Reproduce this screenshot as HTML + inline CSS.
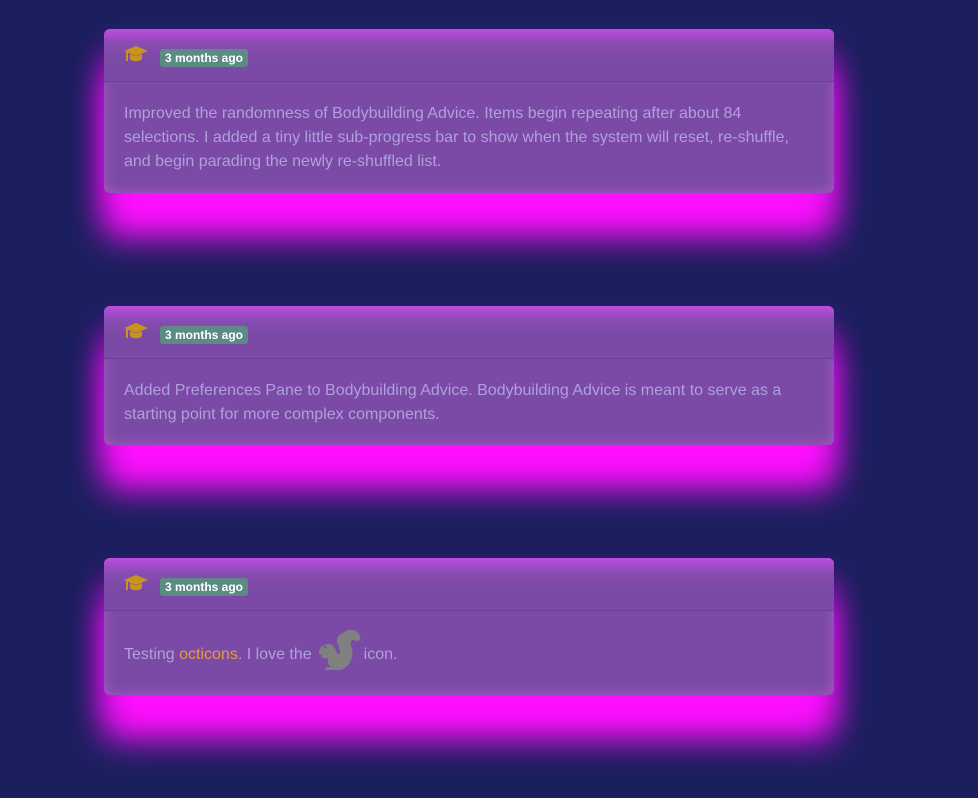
<!DOCTYPE html>
<html><head><style>
body{margin:0;background:#1b1f5e;width:978px;height:798px;overflow:hidden;font-family:"Liberation Sans",sans-serif;}
.card{position:absolute;left:104px;width:730px;border-radius:6px;background:#7a4aa6;
box-shadow:0 44px 34px 0 #ff10ff, 0 20px 30px rgba(255,0,255,.6), inset 0 0 14px rgba(255,120,255,.35);}
.hd{height:52px;border-bottom:1px solid #67408f;position:relative;background:linear-gradient(#c04ce0 0,#8a4cb4 14px,#7a4aa6 30px);border-radius:6px 6px 0 0;}
.cap{position:absolute;left:20px;top:16px;}
.badge{position:absolute;left:56px;top:20px;background:#5c8a84;color:#fff;font-weight:bold;font-size:12px;padding:3px 5px 3px 5px;border-radius:3px;line-height:12px;}
.bd{padding:20px 20px 19px;color:#b0a0dc;font-size:16px;line-height:24px;}
.o{color:#e89a40}
</style></head><body>
<div class="card" style="top:29px;height:164px">
<div class="hd"><svg class="cap" width="25" height="18" viewBox="0 0 25 18"><path d="M12 1L24 6 12 11 0 6z" fill="#c8941c"/><path d="M6 9v5c2 3 10 3 12 0V9l-6 2.5z" fill="#c8941c"/><rect x="2" y="7" width="2" height="9" fill="#c8941c"/></svg><span class="badge">3 months ago</span></div>
<div class="bd">Improved the randomness of Bodybuilding Advice. Items begin repeating after about 84 selections. I added a tiny little sub-progress bar to show when the system will reset, re-shuffle, and begin parading the newly re-shuffled list.</div>
</div>
<div class="card" style="top:306px;height:139px">
<div class="hd"><svg class="cap" width="25" height="18" viewBox="0 0 25 18"><path d="M12 1L24 6 12 11 0 6z" fill="#c8941c"/><path d="M6 9v5c2 3 10 3 12 0V9l-6 2.5z" fill="#c8941c"/><rect x="2" y="7" width="2" height="9" fill="#c8941c"/></svg><span class="badge">3 months ago</span></div>
<div class="bd">Added Preferences Pane to Bodybuilding Advice. Bodybuilding Advice is meant to serve as a starting point for more complex components.</div>
</div>
<div class="card" style="top:558px;height:137px">
<div class="hd"><svg class="cap" width="25" height="18" viewBox="0 0 25 18"><path d="M12 1L24 6 12 11 0 6z" fill="#c8941c"/><path d="M6 9v5c2 3 10 3 12 0V9l-6 2.5z" fill="#c8941c"/><rect x="2" y="7" width="2" height="9" fill="#c8941c"/></svg><span class="badge">3 months ago</span></div>
<div class="bd" style="padding-top:18px">Testing <span class="o">octicons</span>. I love the<svg width="50" height="42" viewBox="0 0 48 42" style="vertical-align:-12px;margin:0 2px 0 0"><path d="M30 4c6-6 18-3 17 6-1 3-4 2-6 1-3 0-4 2-3 6 4 9 0 20-10 24H14c-2 0-2-3 0-3h4c-3-2-4-6-3-9-3 1-6 0-7-2l2-1c-2 0-4-1-4-3 0-4 4-8 9-8 4 0 7 3 8 7 1 3 3 4 4 2 0-6-3-8-3-13 0-3 2-5 6-7z" fill="#808080"/><circle cx="12" cy="18" r="1.3" fill="#7a4aa6"/></svg>icon.</div>
</div>
</body></html>
